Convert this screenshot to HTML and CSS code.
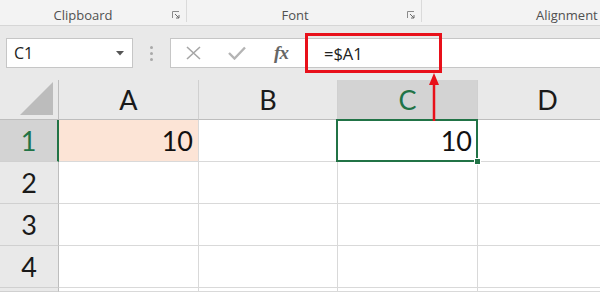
FILE: index.html
```html
<!DOCTYPE html>
<html lang="en">
<head>
    <meta charset="UTF-8">
    <meta name="viewport" content="width=device-width, initial-scale=1.0">
    <title>Relative reference</title>
    <link rel="stylesheet" href="styles.css">
</head>
<body>

    <!-- ribbon group labels -->
    <div class="ribbon">
        <div class="group group-clip">
            <span class="group-label">Clipboard</span>
            <svg class="launcher" width="8" height="8" viewBox="0 0 8 8"><path d="M0.5 7V0.5H7" fill="none" stroke="#8a8a8a"/><path d="M3 3L7 7M7 4V7H4" fill="none" stroke="#6a6a6a"/></svg>
        </div>
        <div class="group group-font">
            <span class="group-label">Font</span>
            <svg class="launcher" width="8" height="8" viewBox="0 0 8 8"><path d="M0.5 7V0.5H7" fill="none" stroke="#8a8a8a"/><path d="M3 3L7 7M7 4V7H4" fill="none" stroke="#6a6a6a"/></svg>
        </div>
        <div class="group group-align">
            <span class="group-label">Alignment</span>
        </div>
    </div>

    <!-- formula bar -->
    <div class="formula-bar">
        <div class="name-box">
            <span>C1</span>
            <svg width="8" height="5" viewBox="0 0 8 5"><path d="M0 0H8L4 4.5Z" fill="#555"/></svg>
        </div>
        <div class="grip"><i></i><i></i><i></i></div>
        <div class="formula-box">
            <span class="fb-icon">
                <svg width="15" height="14" viewBox="0 0 15 14"><path d="M1 1L14 13M14 1L1 13" stroke="#a6a6a6" stroke-width="1.6" fill="none"/></svg>
            </span>
            <span class="fb-icon">
                <svg width="18" height="14" viewBox="0 0 18 14"><path d="M1 7L6.5 12.5L17 1.5" stroke="#b4b4b4" stroke-width="2.4" fill="none"/></svg>
            </span>
            <span class="fb-icon fx">fx</span>
            <span class="formula-text">=$A1</span>
        </div>
    </div>

    <!-- worksheet -->
    <div class="sheet">
        <div class="corner">
            <svg width="34" height="34" viewBox="0 0 34 34"><path d="M33 0V33H0Z" fill="#bcbcbc"/></svg>
        </div>
        <div class="col-head">A</div>
        <div class="col-head">B</div>
        <div class="col-head active">C</div>
        <div class="col-head">D</div>

        <div class="row-head active">1</div>
        <div class="cell shaded">10</div>
        <div class="cell"></div>
        <div class="cell selected">10<span class="fill-handle"></span></div>
        <div class="cell"></div>

        <div class="row-head">2</div>
        <div class="cell"></div>
        <div class="cell"></div>
        <div class="cell"></div>
        <div class="cell"></div>

        <div class="row-head">3</div>
        <div class="cell"></div>
        <div class="cell"></div>
        <div class="cell"></div>
        <div class="cell"></div>

        <div class="row-head">4</div>
        <div class="cell"></div>
        <div class="cell"></div>
        <div class="cell"></div>
        <div class="cell"></div>

        <div class="row-head"></div>
        <div class="cell"></div>
        <div class="cell"></div>
        <div class="cell"></div>
        <div class="cell"></div>
    </div>

    <!-- red annotation -->
    <div class="callout"></div>
    <svg class="callout-arrow" width="12" height="48" viewBox="0 0 12 48">
        <path d="M6 0L11 12H1Z" fill="#e8101a"/>
        <path d="M6 10V48" stroke="#e8101a" stroke-width="2.5"/>
    </svg>

</body>
</html>
```

FILE: styles.css
```css
body {
    margin: 0;
    width: 600px;
    height: 292px;
    overflow: hidden;
    position: relative;
    background: #fff;
    font-family: "Open Sans", "Noto Sans", Arial, sans-serif;
}

/* ribbon */
.ribbon {
    display: flex;
    height: 25px;
    background: #f3f3f3;
    border-bottom: 1px solid #d6d6d6;
    overflow: hidden;
}
.group {
    display: flex;
    align-items: center;
    height: 22px;
    border-right: 1px solid #dadada;
    box-sizing: border-box;
    flex-shrink: 0;
}
.group-clip {
    width: 187px;
}
.group-font {
    width: 235px;
}
.group-align {
    width: 178px;
    padding-left: 114px;
    border-right: none;
}
.group-label {
    flex: 1;
    text-align: center;
    font-size: 13px;
    color: #505050;
    padding-top: 7px;
}
.group-clip .group-label {
    padding-right: 6px;
}
.group-font .group-label {
    padding-right: 4px;
}
.group-align .group-label {
    flex: none;
    white-space: nowrap;
}
.launcher {
    margin: 8px 6px 0 0;
}

/* formula bar */
.formula-bar {
    display: flex;
    height: 54px;
    padding-top: 12px;
    box-sizing: border-box;
    background: #e9e9e9;
}
.name-box {
    display: flex;
    align-items: center;
    justify-content: space-between;
    margin-left: 6px;
    width: 127px;
    height: 30px;
    box-sizing: border-box;
    padding: 0 8px 0 7px;
    background: #fff;
    border: 1px solid #c6c6c6;
    font-size: 16px;
    color: #222;
}
.grip {
    width: 37px;
    display: flex;
    flex-direction: column;
    align-items: center;
    justify-content: center;
    gap: 3px;
    height: 30px;
}
.grip i {
    width: 3px;
    height: 3px;
    border-radius: 2px;
    background: #a9a9a9;
}
.formula-box {
    display: flex;
    align-items: center;
    flex: 1;
    height: 30px;
    box-sizing: border-box;
    background: #fff;
    border: 1px solid #c6c6c6;
    border-right: none;
}
.fb-icon {
    width: 44px;
    display: flex;
    justify-content: center;
    align-items: center;
}
.fx {
    font-family: "Liberation Serif", "Times New Roman", serif;
    font-style: italic;
    font-weight: bold;
    font-size: 19px;
    color: #666;
    letter-spacing: -1px;
}
.formula-text {
    margin-left: 21px;
    font-size: 16.5px;
    color: #222;
}

/* sheet grid */
.sheet {
    display: grid;
    grid-template-columns: 59px 140px 139px 140px 140px;
    grid-template-rows: 40px 42px 42px 42px 42px 4px;
    font-family: Lato, "Liberation Sans", sans-serif;
}
.corner,
.col-head,
.row-head {
    background: #e9e9e9;
    box-sizing: border-box;
}
.corner {
    display: flex;
    align-items: flex-end;
    justify-content: flex-end;
    padding: 0 4px 3px 0;
    border-right: 1px solid #bdbdbd;
    border-bottom: 1px solid #bdbdbd;
}
.col-head {
    display: flex;
    align-items: center;
    justify-content: center;
    font-size: 27px;
    color: #1a1a1a;
    border-right: 1px solid #d0d0d0;
    border-bottom: 1px solid #bdbdbd;
}
.row-head {
    display: flex;
    align-items: center;
    justify-content: center;
    font-size: 27px;
    color: #1a1a1a;
    border-right: 1px solid #bdbdbd;
    border-bottom: 1px solid #d0d0d0;
}
.col-head.active,
.row-head.active {
    background: #d3d3d3;
    color: #217346;
}
.row-head.active {
    border-right: 2px solid #217346;
}
.cell {
    box-sizing: border-box;
    border-right: 1px solid #d9d9d9;
    border-bottom: 1px solid #d9d9d9;
    font-size: 27px;
    line-height: 41px;
    text-align: right;
    padding-right: 5px;
    color: #111;
}
.cell.shaded {
    background: #fce4d6;
}
.cell.selected {
    position: relative;
}
.cell.selected::after {
    content: "";
    position: absolute;
    top: -1px;
    left: -2px;
    right: -1px;
    bottom: -1px;
    border: 2px solid #217346;
}
.fill-handle {
    position: absolute;
    right: -4px;
    bottom: -4px;
    width: 5px;
    height: 5px;
    background: #217346;
    border: 1px solid #fff;
    z-index: 2;
}

/* annotation */
.callout {
    position: absolute;
    left: 305px;
    top: 33px;
    width: 137px;
    height: 40px;
    box-sizing: border-box;
    border: 3px solid #e8101a;
}
.callout-arrow {
    position: absolute;
    left: 428px;
    top: 73px;
}
```
